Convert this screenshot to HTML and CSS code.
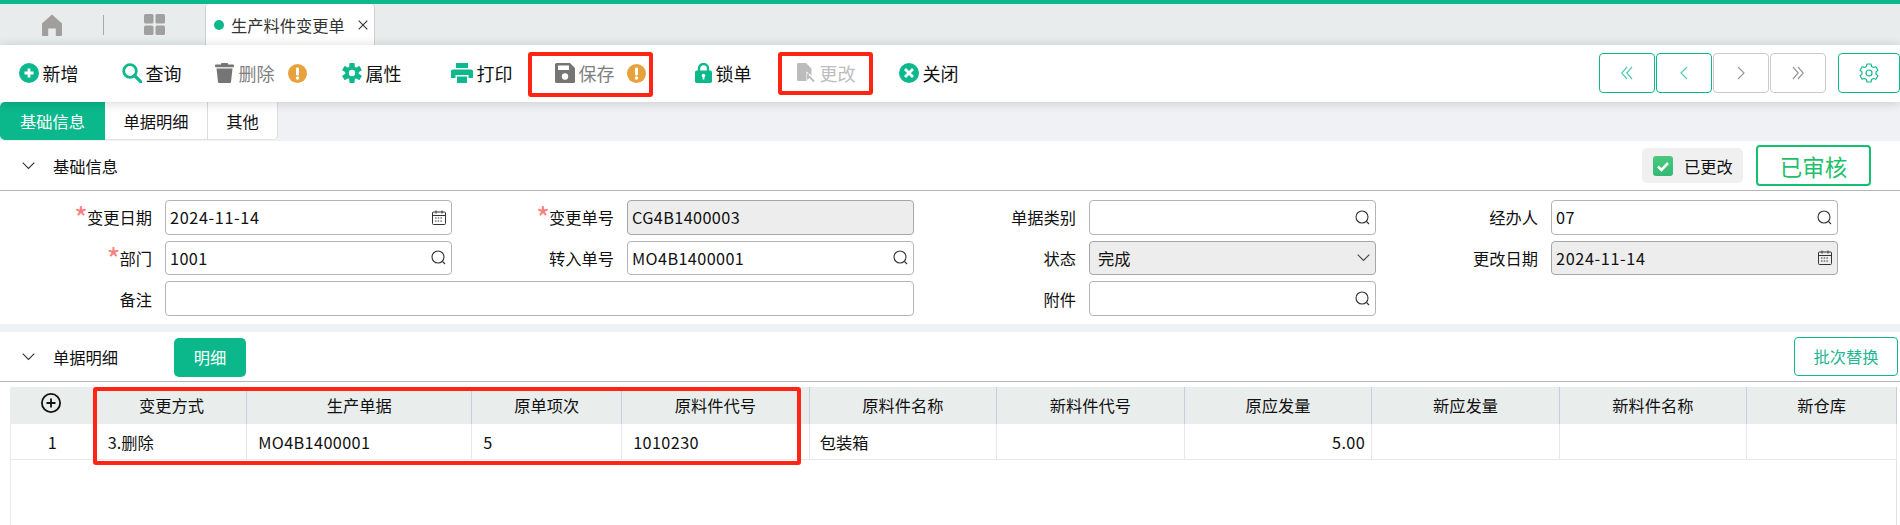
FILE: index.html
```html
<!DOCTYPE html>
<html lang="zh-CN">
<head>
<meta charset="utf-8">
<title>生产料件变更单</title>
<link rel="stylesheet" href="styles.css">
</head>
<body>
<div class="page">
  <div class="topline"></div>
  <nav class="tabbar">
    <span class="tabbar-home">
      <svg width="20" height="22" viewBox="0 0 20 22"><path fill="#a19e9c" d="M10 0.5 20 9.500V21a1 1 0 0 1-1 1h-5.200v-7.500H6.200V22H1a1 1 0 0 1-1-1V9.500Z"/></svg>
    </span>
    <span class="tabbar-sep"></span>
    <span class="tabbar-apps">
      <svg width="21" height="21" viewBox="0 0 21 21" fill="#a0a0a0"><rect width="9.500" height="9.500" rx="1.500"/><rect x="11.500" width="9.500" height="9.500" rx="1.500"/><rect y="11.500" width="9.500" height="9.500" rx="1.500"/><rect x="11.500" y="11.500" width="9.500" height="9.500" rx="1.500"/></svg>
    </span>
    <div class="doc-tab">
      <span class="doc-dot"></span>
      <span class="doc-title">生产料件变更单</span>
      <svg class="doc-close" width="10" height="10" viewBox="0 0 10 10"><path d="M.7.700l8.600 8.600M9.300.700.7 9.300" stroke="#333" stroke-width="1.100" fill="none"/></svg>
    </div>
  </nav>

  <div class="toolbar">
    <button class="tool">
      <svg width="20" height="20" viewBox="0 0 20 20"><circle cx="10" cy="10" r="10" fill="#0db88c"/><path d="M10 5.500v9M5.500 10h9" stroke="#fff" stroke-width="2.800"/></svg>
      <span>新增</span>
    </button>
    <button class="tool">
      <svg width="20" height="20" viewBox="0 0 20 20"><circle cx="8" cy="8" r="6.300" fill="none" stroke="#0db88c" stroke-width="2.800"/><path d="M12.500 12.500 19 19" stroke="#0db88c" stroke-width="3.200" stroke-linecap="round"/></svg>
      <span>查询</span>
    </button>
    <button class="tool tool-muted">
      <svg width="20" height="20" viewBox="0 0 20 20" fill="#757575"><rect y="1.500" width="19" height="2.800" rx=".8"/><rect x="6" y="0" width="7" height="2.500" rx=".8"/><path d="M1.500 5.500h16l-1.500 13.500a1 1 0 0 1-1 1H4a1 1 0 0 1-1-1Z"/></svg>
      <span>删除</span>
      <svg class="warn" width="19" height="19" viewBox="0 0 19 19"><circle cx="9.500" cy="9.500" r="9.500" fill="#e6a23c"/><rect x="8" y="3.500" width="3" height="8" rx="1.200" fill="#fff"/><circle cx="9.500" cy="14" r="1.700" fill="#fff"/></svg>
    </button>
    <button class="tool">
      <svg width="20" height="20" viewBox="0 0 20 20" fill="#0db88c"><g><rect x="7.300" y="0" width="5.400" height="20" rx="1"/><rect x="7.300" y="0" width="5.400" height="20" rx="1" transform="rotate(60 10 10)"/><rect x="7.300" y="0" width="5.400" height="20" rx="1" transform="rotate(120 10 10)"/></g><circle cx="10" cy="10" r="5" fill="none" stroke="#0db88c" stroke-width="3.600"/><circle cx="10" cy="10" r="3.200" fill="#fff"/></svg>
      <span>属性</span>
    </button>
    <button class="tool">
      <svg width="22" height="20" viewBox="0 0 22 20" fill="#0db88c"><path d="M5 0h12v5H5Z"/><path d="M2 6.500h18a2 2 0 0 1 2 2V15h-4.500v-3h-13v3H0V8.500a2 2 0 0 1 2-2Z"/><path d="M6 13.500h10V20H6Z"/></svg>
      <span>打印</span>
    </button>
    <button class="tool tool-muted">
      <svg width="20" height="20" viewBox="0 0 20 20"><path fill="#757575" d="M1.500 0H15l5 5v13.500a1.500 1.500 0 0 1-1.500 1.500h-17A1.500 1.500 0 0 1 0 18.500v-17A1.500 1.500 0 0 1 1.500 0Z"/><rect x="3" y="2.500" width="11" height="4.500" fill="#fff"/><circle cx="10" cy="13.500" r="3.200" fill="#fff"/></svg>
      <span>保存</span>
      <svg class="warn warn-save" width="19" height="19" viewBox="0 0 19 19"><circle cx="9.500" cy="9.500" r="9.500" fill="#e6a23c"/><rect x="8" y="3.500" width="3" height="8" rx="1.200" fill="#fff"/><circle cx="9.500" cy="14" r="1.700" fill="#fff"/></svg>
    </button>
    <button class="tool">
      <svg width="17" height="20" viewBox="0 0 17 20"><path d="M4 8V5.500a4.500 4.500 0 0 1 9 0V8" fill="none" stroke="#0db88c" stroke-width="2.400"/><rect y="7.500" width="17" height="12.500" rx="1.800" fill="#0db88c"/><circle cx="8.500" cy="12.500" r="1.800" fill="#fff"/><rect x="7.600" y="12.500" width="1.800" height="4" fill="#fff"/></svg>
      <span>锁单</span>
    </button>
    <button class="tool tool-faint">
      <svg width="19" height="20" viewBox="0 0 19 20"><path fill="#bcbcbc" d="M0 1a1 1 0 0 1 1-1h8l5.500 5.500v7L9.500 8.500V18H1a1 1 0 0 1-1-1Z"/><path d="M11 10.500V15l1.400-1.200L17 18.500" fill="none" stroke="#bcbcbc" stroke-width="1.800"/></svg>
      <span>更改</span>
    </button>
    <button class="tool">
      <svg width="20" height="20" viewBox="0 0 20 20"><circle cx="10" cy="10" r="10" fill="#0db88c"/><path d="M6 6l8 8M14 6l-8 8" stroke="#fff" stroke-width="2.800"/></svg>
      <span>关闭</span>
    </button>
    <div class="pager">
      <button class="page-btn">
        <svg width="12" height="14" viewBox="0 0 12 14"><path d="M6 1 .8 7 6 13M11 1 5.800 7 11 13" fill="none" stroke="#55cbae" stroke-width="1.200"/></svg>
      </button>
      <button class="page-btn">
        <svg width="8" height="14" viewBox="0 0 8 14"><path d="M7 1 1 7l6 6" fill="none" stroke="#55cbae" stroke-width="1.200"/></svg>
      </button>
      <button class="page-btn page-btn-off">
        <svg width="8" height="14" viewBox="0 0 8 14"><path d="M1 1l6 6-6 6" fill="none" stroke="#999" stroke-width="1.200"/></svg>
      </button>
      <button class="page-btn page-btn-off">
        <svg width="12" height="14" viewBox="0 0 12 14"><path d="M1 1l5.200 6L1 13M6 1l5.200 6L6 13" fill="none" stroke="#999" stroke-width="1.200"/></svg>
      </button>
      <button class="page-btn gear-btn">
        <svg width="20" height="20" viewBox="0 0 20 20" fill="none" stroke="#14b98f" stroke-width="1.200"><circle cx="10" cy="10" r="3"/><path d="M8 1h4l.6 2.500 1.800 1 2.500-.8 2 3.500-1.900 1.700v2.200l1.900 1.700-2 3.500-2.500-.8-1.800 1L12 19H8l-.6-2.500-1.800-1-2.500.8-2-3.500L3 11.100V8.900L1.100 7.200l2-3.500 2.500.8 1.800-1Z" stroke-linejoin="round"/></svg>
      </button>
    </div>
  </div>

  <div class="subtabs">
    <span class="subtab subtab-on">基础信息</span>
    <span class="subtab subtab-mid">单据明细</span>
    <span class="subtab subtab-end">其他</span>
  </div>

  <header class="sec-head">
    <svg class="chev" width="13" height="8" viewBox="0 0 13 8"><path d="M.7.700 6.500 6.500 12.300.7" fill="none" stroke="#333" stroke-width="1.100"/></svg>
    <span class="sec-title">基础信息</span>
    <div class="sec-right">
      <span class="changed">
        <svg width="20" height="20" viewBox="0 0 20 20"><defs><linearGradient id="ck" x1="0" y1="0" x2="0" y2="1"><stop offset="0" stop-color="#49c97e"/><stop offset="1" stop-color="#33b874"/></linearGradient></defs><rect width="20" height="20" rx="3" fill="url(#ck)"/><path d="M5 10.500 8.500 14 15 7" fill="none" stroke="#fff" stroke-width="2.600"/></svg>
        <span>已更改</span>
      </span>
      <span class="stamp">已审核</span>
    </div>
  </header>

  <section class="form">
    <div class="field"><label class="lbl"><i>*</i>变更日期</label>
      <div class="inp"><span class="val val-date">2024-11-14</span><svg class="ico" width="14" height="15" viewBox="0 0 14 15" fill="none" stroke="#333" stroke-width="1"><rect x=".5" y="2" width="13" height="12.500" rx="1"/><path d="M.5 5.500h13M4 .5v3M10 .5v3"/><path d="M3 8h8M3 11h8" stroke-dasharray="1.500 1.200"/></svg></div></div>
    <div class="field"><label class="lbl"><i>*</i>变更单号</label>
      <div class="inp inp-off"><span class="val">CG4B1400003</span></div></div>
    <div class="field"><label class="lbl">单据类别</label>
      <div class="inp"><svg class="ico" width="15" height="15" viewBox="0 0 15 15" fill="none" stroke="#333" stroke-width="1.100"><circle cx="7" cy="7" r="6"/><path d="M11.500 11.500l2.500 2.500"/></svg></div></div>
    <div class="field"><label class="lbl">经办人</label>
      <div class="inp"><span class="val">07</span><svg class="ico" width="15" height="15" viewBox="0 0 15 15" fill="none" stroke="#333" stroke-width="1.100"><circle cx="7" cy="7" r="6"/><path d="M11.500 11.500l2.500 2.500"/></svg></div></div>

    <div class="field"><label class="lbl"><i>*</i>部门</label>
      <div class="inp"><span class="val">1001</span><svg class="ico" width="15" height="15" viewBox="0 0 15 15" fill="none" stroke="#333" stroke-width="1.100"><circle cx="7" cy="7" r="6"/><path d="M11.500 11.500l2.500 2.500"/></svg></div></div>
    <div class="field"><label class="lbl">转入单号</label>
      <div class="inp"><span class="val">MO4B1400001</span><svg class="ico" width="15" height="15" viewBox="0 0 15 15" fill="none" stroke="#333" stroke-width="1.100"><circle cx="7" cy="7" r="6"/><path d="M11.500 11.500l2.500 2.500"/></svg></div></div>
    <div class="field"><label class="lbl">状态</label>
      <div class="inp inp-off"><span class="val val-pad">完成</span><svg class="ico" width="13" height="8" viewBox="0 0 13 8"><path d="M.7.700 6.500 6.500 12.300.7" fill="none" stroke="#444" stroke-width="1.100"/></svg></div></div>
    <div class="field"><label class="lbl">更改日期</label>
      <div class="inp inp-off"><span class="val val-date">2024-11-14</span><svg class="ico" width="14" height="15" viewBox="0 0 14 15" fill="none" stroke="#333" stroke-width="1"><rect x=".5" y="2" width="13" height="12.500" rx="1"/><path d="M.5 5.500h13M4 .5v3M10 .5v3"/><path d="M3 8h8M3 11h8" stroke-dasharray="1.500 1.200"/></svg></div></div>

    <div class="field field-wide"><label class="lbl">备注</label>
      <div class="inp"></div></div>
    <div class="field"><label class="lbl">附件</label>
      <div class="inp"><svg class="ico" width="15" height="15" viewBox="0 0 15 15" fill="none" stroke="#333" stroke-width="1.100"><circle cx="7" cy="7" r="6"/><path d="M11.500 11.500l2.500 2.500"/></svg></div></div>
  </section>

  <div class="band"></div>

  <header class="sec-head sec-head-2">
    <svg class="chev" width="13" height="8" viewBox="0 0 13 8"><path d="M.7.700 6.500 6.500 12.300.7" fill="none" stroke="#333" stroke-width="1.100"/></svg>
    <span class="sec-title">单据明细</span>
    <button class="detail-btn">明细</button>
    <button class="batch-btn">批次替换</button>
  </header>

  <div class="grid-wrap">
    <table class="grid">
      <colgroup>
        <col class="c-idx"><col class="c-s"><col class="c-l"><col class="c-s"><col class="c-m"><col class="c-m"><col class="c-m"><col class="c-m"><col class="c-m"><col class="c-m"><col class="c-s">
      </colgroup>
      <thead>
        <tr>
          <th class="th-add"><svg width="20" height="20" viewBox="0 0 20 20" fill="none" stroke="#111" stroke-width="1.800"><circle cx="10" cy="10" r="9.100"/><path d="M10 5.500v9M5.500 10h9"/></svg></th>
          <th>变更方式</th><th>生产单据</th><th>原单项次</th><th>原料件代号</th><th>原料件名称</th><th>新料件代号</th><th>原应发量</th><th>新应发量</th><th>新料件名称</th><th>新仓库</th>
        </tr>
      </thead>
      <tbody>
        <tr>
          <td class="td-idx">1</td><td>3.删除</td><td class="num">MO4B1400001</td><td>5</td><td class="num">1010230</td><td class="td-name">包装箱</td><td></td><td class="td-right num">5.00</td><td></td><td></td><td></td>
        </tr>
      </tbody>
    </table>
  </div>

  <div class="mark mark-save"></div>
  <div class="mark mark-edit"></div>
  <div class="mark mark-table"></div>
</div>
</body>
</html>
```

FILE: styles.css
```css
* { box-sizing: border-box; }
html, body { margin: 0; padding: 0; }
body {
  font-family: "Noto Sans CJK SC", "Noto Sans", sans-serif;
  font-size: 16.25px;
  color: #111;
  background: #fff;
  overflow: hidden;
}
button { font: inherit; color: inherit; background: none; border: 0; padding: 0; }
svg { display: block; flex: none; }

.page { position: relative; width: 1900px; height: 525px; overflow: hidden; display: flex; flex-direction: column; }
.topline { height: 4px; background: #0db88c; flex: none; }

.tabbar { height: 41px; flex: none; background: #e9ecec; display: flex; align-items: center; }
.tabbar-home { margin-left: 42px; }
.tabbar-sep { width: 1px; height: 20px; background: #a8a8a8; margin-left: 41px; }
.tabbar-apps { margin-left: 40px; }
.doc-tab {
  margin-left: 40px; width: 170px; height: 41px; background: #fff;
  border: solid #cfcfcf; border-width: 0 1px; border-radius: 4px 4px 0 0;
  display: flex; align-items: center; padding-left: 8px;
}
.doc-dot { width: 10px; height: 10px; border-radius: 50%; background: #0db88c; }
.doc-title { margin-left: 7px; color: #333; line-height: 22px; }
.doc-close { margin-left: 13px; }

.toolbar {
  height: 57px; flex: none; background: #fff; position: relative; z-index: 1;
  box-shadow: 0 1px 10px rgba(0, 0, 0, .17);
  display: grid; align-items: center; padding: 0 0 1px 19px;
  grid-template-columns: 103px 93px 127px 109px 104px 140px 102px 102px 102px 1fr;
}
.tool { display: flex; align-items: center; gap: 3.5px; font-size: 18px; line-height: 24px; color: #111; text-align: left; }
.tool-muted { color: #7f7f7f; }
.tool-faint { color: #bdbdbd; }
.warn { margin-left: 10px; }
.warn-save { margin-left: 9px; }
.pager { display: flex; gap: 1px; justify-content: flex-end; align-items: center; }
.page-btn {
  width: 56px; height: 40px; border: 1px solid #0db88c; border-radius: 4px;
  display: flex; align-items: center; justify-content: center;
}
.page-btn-off { border-color: #cacaca; }
.gear-btn { width: 62px; margin-left: 11px; }

.subtabs { height: 39px; flex: none; background: #eff1f4; display: flex; align-items: stretch; padding-bottom: 1px; }
.subtab { display: flex; align-items: center; justify-content: center; background: #fff; line-height: 22px; border-bottom: 1px solid #e4e4e8; }
.subtab-on { width: 105px; background: #0bb88c; color: #fff; border-radius: 5px 0 0 5px; border-bottom: 0; }
.subtab-mid { width: 103px; border-right: 1px solid #dcdcdc; }
.subtab-end { width: 70px; border-right: 1px solid #dcdcdc; border-radius: 0 0 5px 0; }

.sec-head {
  height: 50px; flex: none; border-bottom: 1px solid #b5b5b5;
  display: flex; align-items: center; padding-left: 22px;
}
.sec-title { margin-left: 18px; line-height: 22px; }
.sec-right { margin-left: auto; display: flex; align-items: center; gap: 13px; padding-right: 29px; }
.changed {
  width: 101px; height: 35px; background: #f0f0f0; border-radius: 5px;
  display: flex; align-items: center; gap: 11px; padding-left: 11px;
}
.stamp {
  width: 115px; height: 41px; border: 2px solid #12c06e; border-radius: 4px;
  display: flex; align-items: center; justify-content: center;
  font-size: 22.5px; color: #1fbf6b; line-height: 28px;
}

.form {
  flex: none; display: grid; grid-template-columns: repeat(4, 462px);
  row-gap: 6px; padding: 9px 0 7.67px; grid-auto-rows: 34.67px;
}
.field { display: grid; grid-template-columns: 152px 286.5px; column-gap: 13px; align-items: center; }
.field-wide { grid-column: span 2; grid-template-columns: 152px 748.5px; }
.lbl { text-align: right; line-height: 22px; white-space: nowrap; }
.lbl i { color: #f97f7f; font-style: normal; font-size: 30px; line-height: 16px; vertical-align: -6px; margin-right: -1px; }
.inp {
  height: 34.67px; border: 1px solid #b4b4b4; border-radius: 4px; background: #fff;
  display: flex; align-items: center; padding: 0 5px 0 4px;
}
.inp-off { background: #ecedec; border-color: #a6a6a6; }
.val { letter-spacing: .38px; line-height: 22px; }
.val-date { letter-spacing: .62px; }
.val-pad { margin-left: 4px; letter-spacing: 0; }
.ico { margin-left: auto; }

.band { height: 8.66px; flex: none; background: #eff1f4; }

.detail-btn {
  width: 72px; height: 39px; margin-left: 56px; background: #0bb88c; color: #fff;
  border-radius: 5px; line-height: 22px; margin-top: 1px;
}
.batch-btn {
  width: 104px; height: 39px; margin-left: auto; margin-right: 2px; margin-top: -1px;
  border: 1px solid #0db88c; border-radius: 4px; color: #1fb794; line-height: 22px;
}

.grid-wrap {
  flex: 1; margin: 4.67px 3px 0 10px;
  border-left: 1px solid #e8e8ee; border-right: 1px solid #e0e0e8;
}
.grid { border-collapse: collapse; table-layout: fixed; width: 1886.67px; margin-left: -1px; }
.c-idx { width: 86.67px; }
.c-s { width: 150px; }
.c-l { width: 225px; }
.c-m { width: 187.5px; }
.grid th {
  height: 37px; padding: 0; background: #e9edec; font-weight: 400; text-align: center;
  border-right: 1px solid #c9ccdc; line-height: 22px;
}
.grid th.th-add { border-right: 0; }
.th-add svg { margin: -5px 0 0 31px; }
.grid td {
  height: 36px; padding: 0 0 0 11px; border-right: 1px solid #e6e8ee; border-bottom: 1px solid #e6e8ee;
  line-height: 22px; white-space: nowrap;
}
.grid .td-idx { text-align: center; padding: 0 2px 0 0; border-right: 0; }
.grid .td-name { padding-left: 10px; }
.grid .num { letter-spacing: .38px; }
.grid .td-right { text-align: right; padding: 0 6px 0 0; }

.mark { position: absolute; z-index: 2; border: 4px solid #ff2414; border-radius: 3px; pointer-events: none; }
.mark-save { left: 528px; top: 52px; width: 125px; height: 45px; }
.mark-edit { left: 778px; top: 52px; width: 95px; height: 43px; }
.mark-table { left: 93px; top: 387px; width: 708px; height: 78px; }
```
